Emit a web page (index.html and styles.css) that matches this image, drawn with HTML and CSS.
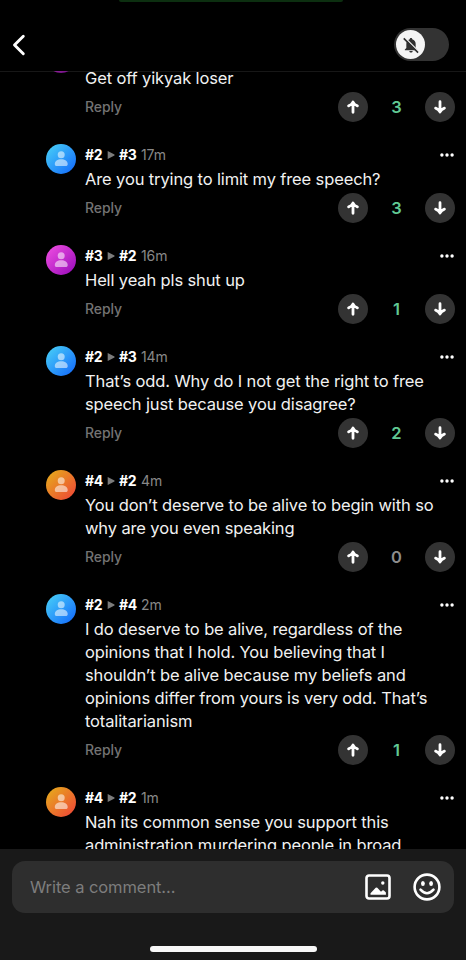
FILE: index.html
```
<!DOCTYPE html>
<html lang="en">
<head>
<meta charset="utf-8">
<title>Comments</title>
<link rel="stylesheet" href="styles.css">
</head>
<body>
<svg class="sprite" aria-hidden="true">
  <symbol id="person" viewBox="0 0 30 30"><circle cx="15.2" cy="10.7" r="3.5"/><path d="M8.800 20c0-3 2.700-4.700 6.400-4.700s6.500 1.700 6.500 4.700c0 1.400-.7 2.100-2 2.100h-8.900c-1.300 0-2-.7-2-2.100z"/></symbol>
  <symbol id="up" viewBox="0 0 30 30"><path d="M15 20.300V10.500M10.600 13.900Q13.700 12.900 15 10Q16.300 12.900 19.400 13.900"/></symbol>
  <symbol id="down" viewBox="0 0 30 30"><path d="M15 9.700V19.500M10.600 16.100Q13.700 17.100 15 20Q16.300 17.100 19.400 16.100"/></symbol>
  <symbol id="play" viewBox="0 0 8 8"><path d="M.7.1v7.800L7.500 4.600V3.400z"/></symbol>
  <symbol id="dots" viewBox="0 0 14 4"><circle cx="1.900" cy="2" r="1.700"/><circle cx="7" cy="2" r="1.700"/><circle cx="12.100" cy="2" r="1.700"/></symbol>
</svg>
<div class="screen">
  <header class="topbar">
    <span class="activity"></span>
    <svg class="back" viewBox="0 0 14 22"><path d="M11.300 2.200L2.500 11l8.800 8.800"/></svg>
    <div class="toggle"><div class="knob">
      <svg viewBox="0 0 24 24"><path class="bell" d="M12 3.600c-.9 0-1.500.6-1.500 1.400C7.900 5.700 6.400 7.900 6.400 10.500v5L4.600 17.300v.9h14.800v-.9l-1.800-1.800v-5c0-2.600-1.500-4.800-4.100-5.500 0-.8-.6-1.400-1.500-1.400zM10 19.200c0 1.100.9 1.900 2 1.900s2-.8 2-1.900z"/><path class="gap" d="M4.500 3L21.500 20"/><path class="slash" d="M3.300 4L20.500 21.200"/></svg>
    </div></div>
  </header>

  <main class="thread">
    <article class="comment">
      <div class="avatar magenta"><svg><use href="#person"/></svg></div>
      <div class="main">
        <div class="meta"></div>
        <p class="text">Get off yikyak loser</p>
        <div class="actions"><span class="reply">Reply</span><div class="votes"><span class="vote"><svg><use href="#up"/></svg></span><span class="count">3</span><span class="vote"><svg><use href="#down"/></svg></span></div></div>
      </div>
    </article>
    <article class="comment">
      <div class="avatar blue"><svg><use href="#person"/></svg></div>
      <div class="main">
        <div class="meta"><b>#2</b><svg class="play"><use href="#play"/></svg><b>#3</b><time>17m</time><svg class="dots"><use href="#dots"/></svg></div>
        <p class="text">Are you trying to limit my free speech?</p>
        <div class="actions"><span class="reply">Reply</span><div class="votes"><span class="vote"><svg><use href="#up"/></svg></span><span class="count">3</span><span class="vote"><svg><use href="#down"/></svg></span></div></div>
      </div>
    </article>
    <article class="comment">
      <div class="avatar magenta"><svg><use href="#person"/></svg></div>
      <div class="main">
        <div class="meta"><b>#3</b><svg class="play"><use href="#play"/></svg><b>#2</b><time>16m</time><svg class="dots"><use href="#dots"/></svg></div>
        <p class="text">Hell yeah pls shut up</p>
        <div class="actions"><span class="reply">Reply</span><div class="votes"><span class="vote"><svg><use href="#up"/></svg></span><span class="count">1</span><span class="vote"><svg><use href="#down"/></svg></span></div></div>
      </div>
    </article>
    <article class="comment">
      <div class="avatar blue"><svg><use href="#person"/></svg></div>
      <div class="main">
        <div class="meta"><b>#2</b><svg class="play"><use href="#play"/></svg><b>#3</b><time>14m</time><svg class="dots"><use href="#dots"/></svg></div>
        <p class="text">That’s odd. Why do I not get the right to free<br>speech just because you disagree?</p>
        <div class="actions"><span class="reply">Reply</span><div class="votes"><span class="vote"><svg><use href="#up"/></svg></span><span class="count">2</span><span class="vote"><svg><use href="#down"/></svg></span></div></div>
      </div>
    </article>
    <article class="comment">
      <div class="avatar orange"><svg><use href="#person"/></svg></div>
      <div class="main">
        <div class="meta"><b>#4</b><svg class="play"><use href="#play"/></svg><b>#2</b><time>4m</time><svg class="dots"><use href="#dots"/></svg></div>
        <p class="text">You don’t deserve to be alive to begin with so<br>why are you even speaking</p>
        <div class="actions"><span class="reply">Reply</span><div class="votes"><span class="vote"><svg><use href="#up"/></svg></span><span class="count zero">0</span><span class="vote"><svg><use href="#down"/></svg></span></div></div>
      </div>
    </article>
    <article class="comment">
      <div class="avatar blue"><svg><use href="#person"/></svg></div>
      <div class="main">
        <div class="meta"><b>#2</b><svg class="play"><use href="#play"/></svg><b>#4</b><time>2m</time><svg class="dots"><use href="#dots"/></svg></div>
        <p class="text">I do deserve to be alive, regardless of the<br>opinions that I hold. You believing that I<br>shouldn’t be alive because my beliefs and<br>opinions differ from yours is very odd. That’s<br>totalitarianism</p>
        <div class="actions"><span class="reply">Reply</span><div class="votes"><span class="vote"><svg><use href="#up"/></svg></span><span class="count">1</span><span class="vote"><svg><use href="#down"/></svg></span></div></div>
      </div>
    </article>
    <article class="comment">
      <div class="avatar orange"><svg><use href="#person"/></svg></div>
      <div class="main">
        <div class="meta"><b>#4</b><svg class="play"><use href="#play"/></svg><b>#2</b><time>1m</time><svg class="dots"><use href="#dots"/></svg></div>
        <p class="text">Nah its common sense you support this<br>administration murdering people in broad</p>
      </div>
    </article>
  </main>

  <footer class="composer">
    <div class="field">
      <span class="placeholder">Write a comment...</span>
      <svg class="photo" viewBox="0 0 26 26"><rect x="1.500" y="1.500" width="23" height="23" rx="2.500"/><circle cx="17.800" cy="9" r="1.700"/><path d="M5.500 20.800v-1.600l5.200-5.400q.8-.8 1.600 0l3.700 4 1.300-1.300q.8-.7 1.600 0l2 2v2.300z"/></svg>
      <svg class="smile" viewBox="0 0 28 28"><circle cx="14" cy="14" r="12.400"/><ellipse cx="9.900" cy="10.600" rx="1.900" ry="2.500"/><ellipse cx="18.100" cy="10.600" rx="1.900" ry="2.500"/><path d="M7.500 16.700Q14 23.700 20.500 16.700"/></svg>
    </div>
    <div class="home"></div>
  </footer>
</div>
</body>
</html>
```
FILE: styles.css
```
* { box-sizing: border-box; }
body { margin: 0; background: #000; color: #f1f1f1; font-family: Inter, "Liberation Sans", sans-serif; }
.sprite { position: absolute; width: 0; height: 0; }
.screen { display: flex; flex-direction: column; width: 466px; height: 960px; overflow: hidden; }

.topbar { position: relative; flex: none; height: 72px; padding: 18px 17px 0 12px; display: flex; align-items: center; justify-content: space-between; border-bottom: 1px solid #171717; }
.activity { position: absolute; top: 0; left: 119px; width: 224px; height: 2px; background: #0c2f10; border-radius: 0 0 3px 3px; }
.back { width: 14px; height: 22px; fill: none; stroke: #fff; stroke-width: 2.9; stroke-linecap: round; stroke-linejoin: round; }
.toggle { width: 55px; height: 33px; border-radius: 17px; background: #333; padding: 2px; }
.knob { width: 29px; height: 29px; border-radius: 50%; background: #f5f5f5; display: flex; align-items: center; justify-content: center; }
.knob svg { width: 20px; height: 20px; }
.bell { fill: #303030; }
.gap { stroke: #f5f5f5; stroke-width: 1.6; }
.slash { stroke: #303030; stroke-width: 1.9; }

.thread { position: relative; flex: 1; min-height: 0; margin-top: -1px; overflow: hidden; }
.comment { display: flex; gap: 9px; padding: 0 11px 22.2px 46px; }
.comment:first-child { margin-top: -28.3px; }
.comment:first-child .avatar { opacity: .7; }
.avatar { flex: none; width: 30px; height: 30px; border-radius: 50%; }
.avatar svg { display: block; width: 30px; height: 30px; fill: rgba(255, 255, 255, .55); }
.blue { background: linear-gradient(135deg, #45c9f7 10%, #1670fb 90%); }
.magenta { background: linear-gradient(135deg, #e94ade 10%, #9f10bd 90%); }
.orange { background: linear-gradient(135deg, #e6a61d 10%, #ee4c35 90%); }
.main { flex: 1; min-width: 0; }
.meta { display: flex; align-items: center; height: 22px; font-size: 14px; line-height: 22px; }
.meta b { font-weight: 700; color: #fff; width: 17px; white-space: nowrap; letter-spacing: -.4px; }
.play { width: 8px; height: 8px; margin: 0 4px 0 5px; fill: #7b7b7b; }
.meta time { margin-left: 5px; color: #888; letter-spacing: -.1px; }
.dots { width: 14px; height: 4px; margin-left: auto; margin-right: 1px; fill: #fff; }
.text { margin: 1.9px 0 2.7px; font-size: 16.5px; line-height: 22.9px; letter-spacing: -.13px; white-space: nowrap; }
.actions { display: flex; align-items: center; justify-content: space-between; height: 29.5px; }
.reply { margin-top: -1px; font-size: 14px; font-weight: 500; letter-spacing: -.1px; color: #737373; }
.votes { display: flex; align-items: center; }
.vote { width: 30px; height: 30px; border-radius: 50%; background: #333; }
.vote svg { display: block; width: 30px; height: 30px; fill: none; stroke: #fff; stroke-width: 2.8; stroke-linecap: round; stroke-linejoin: round; }
.count { width: 57px; text-align: center; font-size: 16.5px; font-weight: 600; color: #61c995; }
.count.zero { color: #8c8c8c; }

.composer { flex: none; height: 111px; padding: 12px 12px 0; background: #191919; display: flex; flex-direction: column; align-items: center; }
.field { width: 100%; height: 52px; border-radius: 13px; background: #2e2e2e; display: flex; align-items: center; padding: 0 13px 0 18px; }
.placeholder { flex: 1; font-size: 16.5px; letter-spacing: -.08px; color: #7d7d7d; }
.photo { width: 26px; height: 26px; margin-right: 22px; fill: #fff; }
.photo rect { fill: none; stroke: #fff; stroke-width: 2.6; }
.smile { width: 28px; height: 28px; fill: #fff; }
.smile > circle, .smile > path { fill: none; stroke: #fff; stroke-width: 2.6; stroke-linecap: round; }
.home { width: 167px; height: 6px; margin-top: 33px; border-radius: 3px; background: #f8f8f8; }
```
